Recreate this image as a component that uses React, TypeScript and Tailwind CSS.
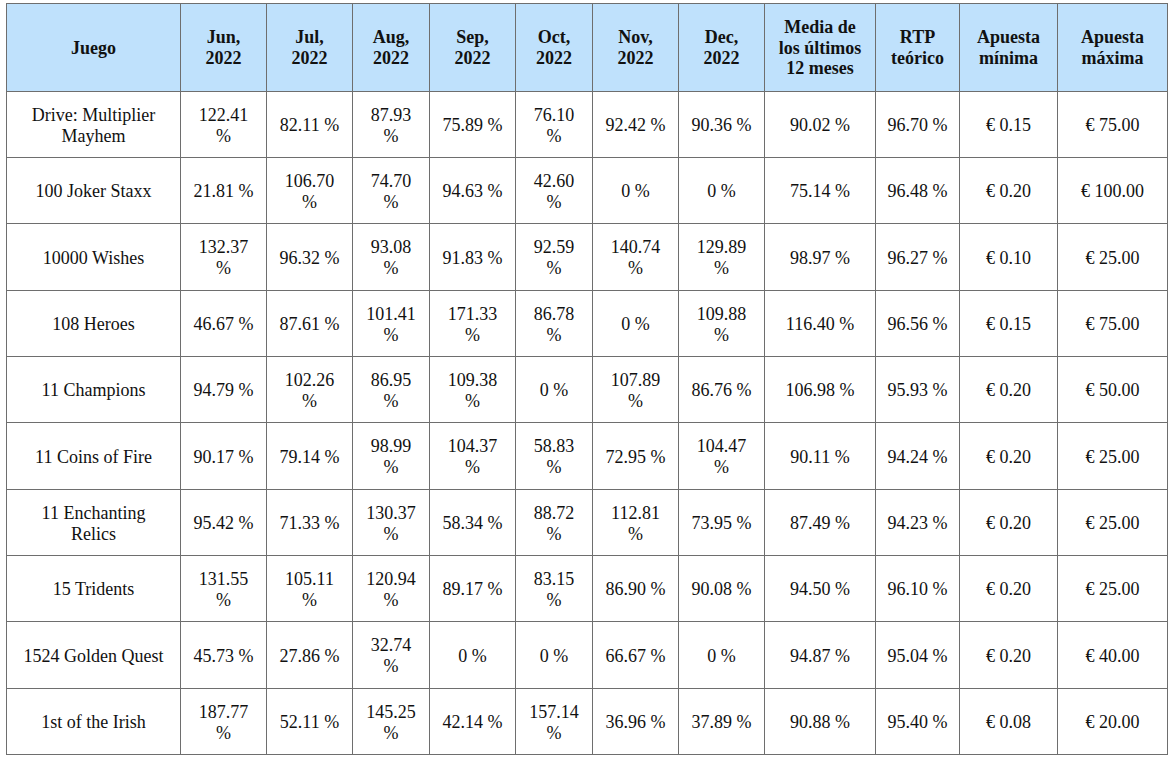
const columns = [
  { label: ["Juego"], width: 174 },
  { label: ["Jun,", "2022"], width: 86 },
  { label: ["Jul,", "2022"], width: 86 },
  { label: ["Aug,", "2022"], width: 77 },
  { label: ["Sep,", "2022"], width: 86 },
  { label: ["Oct,", "2022"], width: 77 },
  { label: ["Nov,", "2022"], width: 86 },
  { label: ["Dec,", "2022"], width: 86 },
  { label: ["Media de los últimos 12 meses"], width: 111 },
  { label: ["RTP teórico"], width: 84 },
  { label: ["Apuesta mínima"], width: 98 },
  { label: ["Apuesta máxima"], width: 110 },
];

const rows: { h: number; cells: string[] }[] = [
  { h: 66, cells: ["Drive: Multiplier Mayhem", "122.41 %", "82.11 %", "87.93 %", "75.89 %", "76.10 %", "92.42 %", "90.36 %", "90.02 %", "96.70 %", "€ 0.15", "€ 75.00"] },
  { h: 66, cells: ["100 Joker Staxx", "21.81 %", "106.70 %", "74.70 %", "94.63 %", "42.60 %", "0 %", "0 %", "75.14 %", "96.48 %", "€ 0.20", "€ 100.00"] },
  { h: 67, cells: ["10000 Wishes", "132.37 %", "96.32 %", "93.08 %", "91.83 %", "92.59 %", "140.74 %", "129.89 %", "98.97 %", "96.27 %", "€ 0.10", "€ 25.00"] },
  { h: 66, cells: ["108 Heroes", "46.67 %", "87.61 %", "101.41 %", "171.33 %", "86.78 %", "0 %", "109.88 %", "116.40 %", "96.56 %", "€ 0.15", "€ 75.00"] },
  { h: 66, cells: ["11 Champions", "94.79 %", "102.26 %", "86.95 %", "109.38 %", "0 %", "107.89 %", "86.76 %", "106.98 %", "95.93 %", "€ 0.20", "€ 50.00"] },
  { h: 67, cells: ["11 Coins of Fire", "90.17 %", "79.14 %", "98.99 %", "104.37 %", "58.83 %", "72.95 %", "104.47 %", "90.11 %", "94.24 %", "€ 0.20", "€ 25.00"] },
  { h: 66, cells: ["11 Enchanting Relics", "95.42 %", "71.33 %", "130.37 %", "58.34 %", "88.72 %", "112.81 %", "73.95 %", "87.49 %", "94.23 %", "€ 0.20", "€ 25.00"] },
  { h: 66, cells: ["15 Tridents", "131.55 %", "105.11 %", "120.94 %", "89.17 %", "83.15 %", "86.90 %", "90.08 %", "94.50 %", "96.10 %", "€ 0.20", "€ 25.00"] },
  { h: 67, cells: ["1524 Golden Quest", "45.73 %", "27.86 %", "32.74 %", "0 %", "0 %", "66.67 %", "0 %", "94.87 %", "95.04 %", "€ 0.20", "€ 40.00"] },
  { h: 66, cells: ["1st of the Irish", "187.77 %", "52.11 %", "145.25 %", "42.14 %", "157.14 %", "36.96 %", "37.89 %", "90.88 %", "95.40 %", "€ 0.08", "€ 20.00"] },
];

const App = () => {
  return (
    <div className="w-[1172px] h-[765px] bg-white pt-[3px] pl-[6px] font-['Liberation_Serif','Times_New_Roman',serif] text-[18px] leading-[20.7px] text-[#111]">
      <table className="table-fixed border-collapse w-[1161px]">
        <colgroup>
          {columns.map((c, i) => (
            <col key={i} style={{ width: c.width }} />
          ))}
        </colgroup>
        <thead>
          <tr className="h-[88px] bg-[#bfe1fc]">
            {columns.map((c, i) => (
              <th key={i} className="border border-[#6e6e6e] px-[10px] pt-[1px] text-center align-middle font-bold">
                {c.label.map((l, j) => (
                  <div key={j}>{l}</div>
                ))}
              </th>
            ))}
          </tr>
        </thead>
        <tbody>
          {rows.map((r, i) => (
            <tr key={i} style={{ height: r.h }}>
              {r.cells.map((v, j) => (
                <td key={j} className="border border-[#6e6e6e] px-[10px] pt-[2px] text-center align-middle">
                  {v}
                </td>
              ))}
            </tr>
          ))}
        </tbody>
      </table>
    </div>
  );
};

export default App;
